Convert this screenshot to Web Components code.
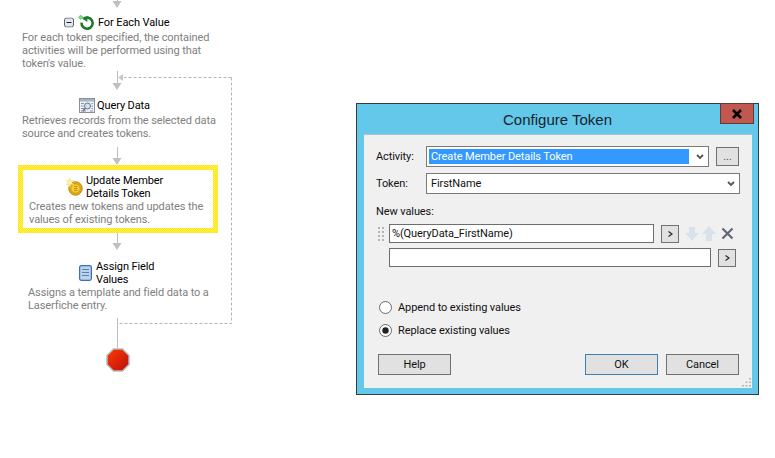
<!DOCTYPE html>
<html>
<head>
<meta charset="utf-8">
<title>Configure Token</title>
<style>
    html, body { margin: 0; background: #fff; }
    body { font-family: Roboto, "Liberation Sans", Arial, sans-serif; letter-spacing: -0.1px; }
    #page { display: flex; align-items: flex-start; width: 775px; height: 458px; overflow: hidden; }
</style>
</head>
<body>
<div id="page">
    <wf-diagram>
        <wf-arrow length="8" start="-6"></wf-arrow>
        <wf-activity icon="loop" collapsible title-left="98" text-left="22" icon-gap="3" style="--pad-top:8px;--text-gap:2px">
            <span slot="title">For Each Value</span>
            For each token specified, the contained<br>activities will be performed using that<br>token's value.
        </wf-activity>
        <wf-arrow length="20" start="1"></wf-arrow>
        <wf-activity icon="query" title-left="97" text-left="22" icon-gap="2" style="--pad-top:9px;--text-gap:2px">
            <span slot="title">Query Data</span>
            Retrieves records from the selected data<br>source and creates tokens.
        </wf-activity>
        <wf-arrow length="25" start="7"></wf-arrow>
        <wf-activity icon="coin" selected title-left="86" text-left="29" icon-gap="3">
            <span slot="title">Update Member<br>Details Token</span>
            Creates new tokens and updates the<br>values of existing tokens.
        </wf-activity>
        <wf-arrow length="17" start="0"></wf-arrow>
        <wf-activity icon="doc" title-left="96" text-left="28" icon-gap="4" style="--pad-top:10px;--text-gap:0px">
            <span slot="title">Assign Field<br>Values</span>
            Assigns a template and field data to a<br>Laserfiche entry.
        </wf-activity>
        <wf-arrow length="36" start="6" plain></wf-arrow>
        <wf-stop></wf-stop>
    </wf-diagram>

    <cfg-dialog heading="Configure Token">
        <cfg-row label="Activity:">
            <win-combo selected style="width:283px">Create Member Details Token</win-combo>
            <win-button style="width:23px;height:19px;margin-left:7px;color:#555">...</win-button>
        </cfg-row>
        <cfg-row label="Token:" style="margin-top:6px">
            <win-combo style="width:314px">FirstName</win-combo>
        </cfg-row>
        <cfg-values style="margin-top:11px">New values:</cfg-values>
        <win-radio style="margin-top:33px">Append to existing values</win-radio>
        <win-radio checked style="margin-top:9px">Replace existing values</win-radio>
        <div slot="footer">
            <win-button style="width:73px;height:21px">Help</win-button>
            <span style="flex:1"></span>
            <win-button focused style="width:73px;height:21px">OK</win-button>
            <win-button style="width:73px;height:21px;margin-left:8px">Cancel</win-button>
        </div>
    </cfg-dialog>
</div>

<script>
const ICONS = {
    loop: `<svg width="17" height="17" viewBox="0 0 17 17">
        <path d="M5.2 4.6a5.6 5.6 0 1 1-1.7 3.6" fill="none" stroke="#1d7a2c" stroke-width="2.6"/>
        <path d="M9.4 1.2v6.4L5 4.4z" fill="#1d7a2c"/>
        <path d="M2.6 0.6l2.4 2.2-2.4 2.2-2.2-2.2z" fill="#6fe07a" stroke="#39b54a" stroke-width=".5"/>
    </svg>`,
    query: `<svg width="16" height="16" viewBox="0 0 16 16">
        <rect x=".5" y=".5" width="15" height="14" fill="#eef0f3" stroke="#8a8f98"/>
        <rect x="1" y="1" width="14" height="2.5" fill="#a9b3c4"/>
        <path d="M2 5.5h3M2 8h2.5M2 10.500h3M2 13h5M11 13h3M12.500 5.500h1.500M12.500 8h1.500M12.500 10.500h1.500" stroke="#8c95a5"/>
        <circle cx="8.500" cy="8" r="3" fill="#cfe3f5" stroke="#5f7896"/>
        <path d="M6.300 10.300l-2.300 2.700" stroke="#6e6e6e" stroke-width="1.500"/>
    </svg>`,
    coin: `<svg width="17" height="18" viewBox="0 0 17 18">
        <circle cx="9.500" cy="10.500" r="6.800" fill="#e2a90f" stroke="#b9820a" stroke-width=".8"/>
        <circle cx="9.500" cy="10.500" r="4.600" fill="#f4cf3d" stroke="#c9960c" stroke-width=".7"/>
        <path d="M8 8.500h3.500M8 10.500h3.500M8 12.500h3.500" stroke="#b98a0a" stroke-width=".9"/>
        <path d="M3.800 0l1 3 3-.6-2.200 2.200 2.200 2.200-3-.6-1 3-1-3-2.800.6 2-2.200-2-2.200 2.800.6z" fill="#fff3a6" stroke="#ecd36a" stroke-width=".5"/>
    </svg>`,
    doc: `<svg width="13" height="16" viewBox="0 0 13 16">
        <rect x=".6" y=".6" width="11.800" height="14.800" rx="1.800" fill="#b9d3f0" stroke="#3f6fae" stroke-width="1.200"/>
        <path d="M3 4.500h7M3 7.500h7M3 10.500h7" stroke="#5f7fa8"/>
    </svg>`
};

class WfDiagram extends HTMLElement {
    constructor() {
        super();
        this.attachShadow({ mode: 'open' });
        this.shadowRoot.innerHTML = `
        <style>
            :host { display: flex; flex-direction: column; align-items: stretch; position: relative; width: 234px; flex: none; }
            svg { position: absolute; left: 0; top: 0; pointer-events: none; }
        </style>
        <slot></slot>
        <svg width="234" height="330" fill="none">
            <path d="M231.500 77.500V323.500H118M231.500 77.500H124" stroke="#b4b4b4" stroke-dasharray="3 2"/>
            <path d="M118 77.500l5-3.500v7z" fill="#c8c8c8"/>
        </svg>`;
    }
}

class WfArrow extends HTMLElement {
    constructor() {
        super();
        this.attachShadow({ mode: 'open' });
        const len = Number(this.getAttribute('length'));
        const start = Number(this.getAttribute('start'));
        const plain = this.hasAttribute('plain');
        const head = plain ? '' : `<path d="M112.500 ${len - 7}h9l-4.500 7z" fill="#c0c0c0"/>`;
        this.shadowRoot.innerHTML = `
        <style>
            :host { display: block; height: ${len}px; }
            svg { display: block; overflow: visible; }
        </style>
        <svg width="234" height="${len}"><path d="M117.500 ${start}V${plain ? len : len - 5}" stroke="#bdbdbd"/>${head}</svg>`;
    }
}

class WfActivity extends HTMLElement {
    constructor() {
        super();
        this.attachShadow({ mode: 'open' });
        const icon = this.getAttribute('icon');
        const selected = this.hasAttribute('selected');
        // the selected frame starts at x=18 and has a 5px border
        const offset = selected ? 23 : 0;
        const titleLeft = Number(this.getAttribute('title-left')) - offset;
        const textLeft = Number(this.getAttribute('text-left')) - offset;
        const iconGap = Number(this.getAttribute('icon-gap'));
        const collapse = this.hasAttribute('collapsible')
            ? `<svg class="minus" width="10" height="10" viewBox="0 0 10 10"><rect x=".5" y=".5" width="9" height="9" rx="2" fill="#e4e8ef" stroke="#5c6470"/><path d="M2.500 5h5" stroke="#222"/></svg>`
            : '';
        this.shadowRoot.innerHTML = `
        <style>
            :host { display: block; }
            .box { padding-top: var(--pad-top, 0px); }
            :host([selected]) .box {
                margin: 0 16px 0 18px; padding: 4px 0 2px; border: 5px solid transparent;
                background: linear-gradient(#fff,#fff) padding-box,
                    repeating-conic-gradient(#ffe600 0 25%, #fff066 0 50%) 0 0 / 2px 2px border-box;
            }
            .head { padding-left: ${titleLeft}px; position: relative; }
            .title { font-size: 11px; line-height: 13px; color: #000; }
            .icons { position: absolute; right: calc(100% - ${titleLeft - iconGap}px); display: flex; align-items: center; gap: 4px; top: 50%; transform: translateY(-50%); }
            svg { display: block; }
            .text { font-size: 11px; line-height: 13px; color: #808080; padding-left: ${textLeft}px; margin-top: var(--text-gap, 0px); white-space: nowrap; }
        </style>
        <div class="box">
            <div class="head">
                <div class="icons">${collapse}${ICONS[icon]}</div>
                <div class="title"><slot name="title"></slot></div>
            </div>
            <div class="text"><slot></slot></div>
        </div>`;
    }
}

class WfStop extends HTMLElement {
    constructor() {
        super();
        this.attachShadow({ mode: 'open' });
        this.shadowRoot.innerHTML = `
        <style>
            :host { display: flex; justify-content: center; padding-left: 2px; }
            svg { display: block; }
        </style>
        <svg width="24" height="24" viewBox="0 0 24 24">
            <defs><linearGradient id="g" x1="0" y1="0" x2="1" y2="1"><stop offset="0" stop-color="#ff3a00"/><stop offset="1" stop-color="#b80f0f"/></linearGradient></defs>
            <path d="M7.500 1h9L23 7.500v9L16.500 23h-9L1 16.500v-9z" fill="url(#g)" stroke="#b9b9b9" stroke-width="1.500"/>
        </svg>`;
    }
}

class CfgDialog extends HTMLElement {
    constructor() {
        super();
        this.attachShadow({ mode: 'open' });
        this.shadowRoot.innerHTML = `
        <style>
            :host { display: block; flex: none; width: 403px; height: 292px; margin: 103px 0 0 122px; box-sizing: border-box;
                border: 1px solid #3a3a3a; background: #64c8ea; position: relative; }
            .bar { height: 30px; display: flex; align-items: center; justify-content: center; font-family: "Liberation Sans", Arial, sans-serif; font-size: 15px; letter-spacing: 0; color: #16242c; padding-top: 1px; box-sizing: border-box; }
            .close { position: absolute; top: -1px; right: 4px; width: 34px; height: 21px; box-sizing: border-box; background: #c0584f; border: 1px solid #5f3a36;
                display: flex; align-items: center; justify-content: center; }
            .body { margin: 0 6px 6px 7px; height: 254px; box-sizing: border-box; background: #f0f0f0; border: 1px solid #a6c4d0; border-width: 1px 0 0;
                padding: 11px 12px 0 12px; position: relative; display: flex; flex-direction: column; }
            .foot { position: absolute; left: 14px; right: 13px; top: 219px; }
            ::slotted([slot=footer]) { display: flex; }
            .grip { position: absolute; right: 1px; bottom: 1px; }
        </style>
        <div class="bar">${this.getAttribute('heading')}</div>
        <div class="close"><svg width="12" height="10" viewBox="0 0 12 10"><path d="M2 1l8 8M10 1L2 9" stroke="#000" stroke-width="2.600"/></svg></div>
        <div class="body">
            <slot></slot>
            <div class="foot"><slot name="footer"></slot></div>
            <svg class="grip" width="9" height="9" fill="#b5b5b5"><rect x="7" y="0" width="2" height="1.500"/><rect x="7" y="3.500" width="2" height="1.500"/><rect x="3.500" y="3.500" width="2" height="1.500"/><rect x="7" y="7" width="2" height="1.500"/><rect x="3.500" y="7" width="2" height="1.500"/><rect x="0" y="7" width="2" height="1.500"/></svg>
        </div>`;
    }
}

class CfgRow extends HTMLElement {
    constructor() {
        super();
        this.attachShadow({ mode: 'open' });
        this.shadowRoot.innerHTML = `
        <style>
            :host { display: flex; align-items: center; font-size: 11px; color: #111; }
            .label { width: 50px; flex: none; }
        </style>
        <div class="label">${this.getAttribute('label')}</div>
        <slot></slot>`;
    }
}

class CfgValues extends HTMLElement {
    constructor() {
        super();
        this.attachShadow({ mode: 'open' });
        this.shadowRoot.innerHTML = `
        <style>
            :host { display: block; font-size: 11px; line-height: 14px; color: #111; }
            .row { display: flex; align-items: center; margin-top: 5px; }
            .grip { flex: none; width: 13px; height: 16px; }
            .field { box-sizing: border-box; height: 19px; border: 1px solid #6e6e6e; background: #fff; font-size: 11px; line-height: 17px; padding-left: 2px; color: #111; flex: none; }
            .tools { display: flex; align-items: center; margin-left: 7px; }
            svg { display: block; }
            win-button { width: 18px; height: 18px; }
        </style>
        <slot></slot>
        <div class="row">
            <svg class="grip" width="13" height="16" fill="#b5b5b5"><rect x="2" y="1" width="2" height="2"/><rect x="6" y="1" width="2" height="2"/><rect x="2" y="5" width="2" height="2"/><rect x="6" y="5" width="2" height="2"/><rect x="2" y="9" width="2" height="2"/><rect x="6" y="9" width="2" height="2"/><rect x="2" y="13" width="2" height="2"/><rect x="6" y="13" width="2" height="2"/></svg>
            <div class="field" style="width:265px">%(QueryData_FirstName)</div>
            <div class="tools">
                <win-button class="go"></win-button>
                <svg width="60" height="18" viewBox="0 0 60 18" style="margin-left:5px">
                    <path d="M4 2h6v6h4l-7 8-7-8h4z" transform="translate(1 0)" fill="#d9e2eb"/>
                    <path d="M23 1l7 8h-4v7h-6V9h-4z" transform="translate(2 0)" fill="#d9e2eb"/>
                    <path d="M38.500 3.500l10 10M48.500 3.500l-10 10" stroke="#5f6875" stroke-width="2.200"/>
                </svg>
            </div>
        </div>
        <div class="row" style="margin-left:13px">
            <div class="field" style="width:322px"></div>
            <div class="tools"><win-button class="go"></win-button></div>
        </div>`;
        this.shadowRoot.querySelectorAll('.go').forEach((b) => {
            b.innerHTML = `<svg width="5" height="6" viewBox="0 0 5 6"><path d="M.5 .5L4 3 .5 5.500" fill="none" stroke="#222" stroke-width="1.100"/></svg>`;
        });
    }
}

class WinButton extends HTMLElement {
    constructor() {
        super();
        this.attachShadow({ mode: 'open' });
        this.shadowRoot.innerHTML = `
        <style>
            :host { display: inline-flex; align-items: center; justify-content: center; box-sizing: border-box; flex: none;
                background: #e1e1e1; border: 1px solid #707070; font-size: 11px; color: #111; }
            :host([focused]) { border-color: #3c7fb1; }
        </style>
        <slot></slot>`;
    }
}

class WinCombo extends HTMLElement {
    constructor() {
        super();
        this.attachShadow({ mode: 'open' });
        this.shadowRoot.innerHTML = `
        <style>
            :host { display: flex; align-items: center; box-sizing: border-box; height: 21px; flex: none; border: 1px solid #7a7a7a; background: #fff; font-size: 11px; color: #111; padding: 2px; }
            .value { flex: 1; height: 15px; line-height: 15px; padding-left: 2px; }
            :host([selected]) .value { background: #3399ff; color: #fff; }
            .arrow { flex: none; width: 17px; box-sizing: border-box; padding-right: 2px; display: flex; justify-content: flex-end; }
            svg { display: block; }
        </style>
        <div class="value"><slot></slot></div>
        <div class="arrow"><svg width="8" height="6" viewBox="0 0 8 6"><path d="M1 1l3 3 3-3" fill="none" stroke="#555" stroke-width="1.800"/></svg></div>`;
    }
}

class WinRadio extends HTMLElement {
    constructor() {
        super();
        this.attachShadow({ mode: 'open' });
        const dot = this.hasAttribute('checked') ? '<circle cx="6.500" cy="6.500" r="3.200" fill="#222"/>' : '';
        this.shadowRoot.innerHTML = `
        <style>
            :host { display: flex; align-items: center; gap: 6px; height: 14px; padding-left: 3px; font-size: 11px; color: #111; }
            svg { display: block; flex: none; }
        </style>
        <svg width="13" height="13"><circle cx="6.500" cy="6.500" r="6" fill="#fff" stroke="#6a6a6a"/>${dot}</svg>
        <slot></slot>`;
    }
}

customElements.define('wf-diagram', WfDiagram);
customElements.define('wf-arrow', WfArrow);
customElements.define('wf-activity', WfActivity);
customElements.define('wf-stop', WfStop);
customElements.define('cfg-dialog', CfgDialog);
customElements.define('cfg-row', CfgRow);
customElements.define('cfg-values', CfgValues);
customElements.define('win-button', WinButton);
customElements.define('win-combo', WinCombo);
customElements.define('win-radio', WinRadio);
</script>
</body>
</html>
